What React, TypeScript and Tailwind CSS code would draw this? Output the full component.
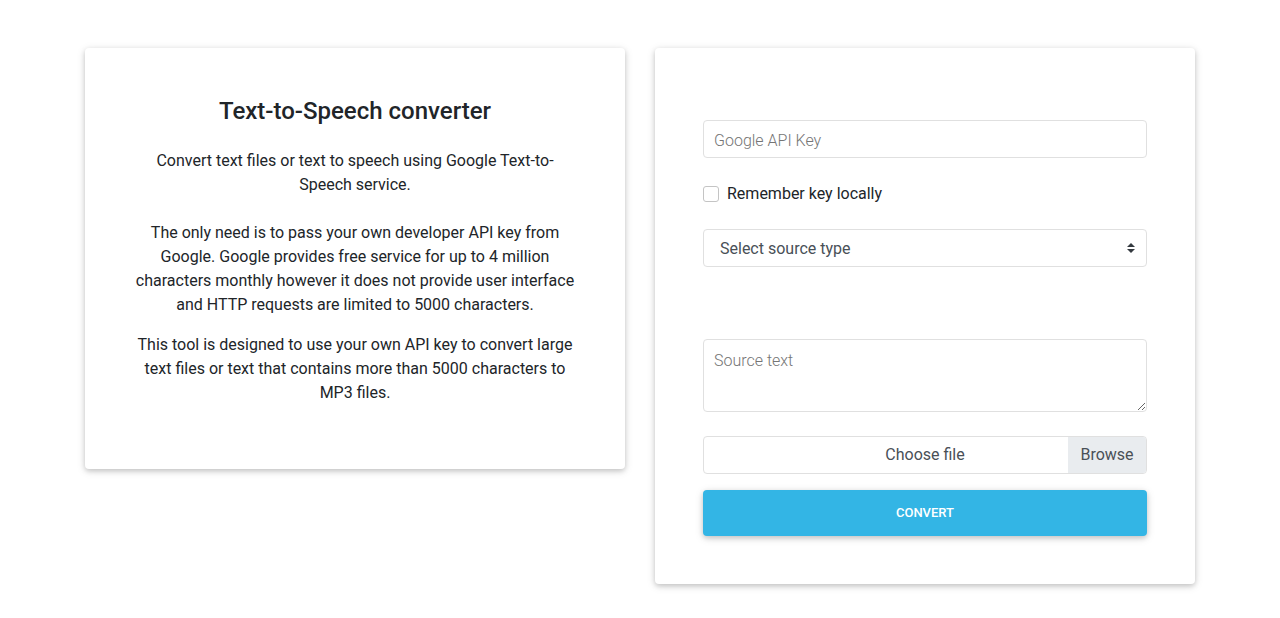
const App = () => {
  return (
    <div className="min-h-[618px] bg-white font-['Roboto',sans-serif] text-[#212529]">
      <div className="mx-auto flex w-[1110px] items-start gap-[30px] pt-12">
        <div className="w-[540px] rounded bg-white px-12 pt-[49px] pb-12 text-center shadow-[0_2px_5px_0_rgba(0,0,0,0.16),0_2px_10px_0_rgba(0,0,0,0.12)]">
          <h4 className="mb-6 text-2xl leading-7 font-medium">Text-to-Speech converter</h4>
          <p className="mb-6 text-base leading-6">
            Convert text files or text to speech using Google Text-to-Speech service.
          </p>
          <p className="mb-4 text-base leading-6">
            The only need is to pass your own developer API key from Google. Google provides free
            service for up to 4 million characters monthly however it does not provide user interface
            and HTTP requests are limited to 5000 characters.
          </p>
          <p className="mb-4 text-base leading-6">
            This tool is designed to use your own API key to convert large text files or text that
            contains more than 5000 characters to MP3 files.
          </p>
        </div>

        <div className="w-[540px] rounded bg-white px-12 pt-[72px] pb-12 shadow-[0_2px_5px_0_rgba(0,0,0,0.16),0_2px_10px_0_rgba(0,0,0,0.12)]">
          <input
            type="text"
            placeholder="Google API Key"
            className="block h-[38px] w-full rounded border border-[#e0e0e0] px-[10px] pt-[3px] text-base font-light text-[#495057] outline-none placeholder:text-[#757575]"
          />
          <label className="mt-6 flex h-6 items-center gap-2 text-base">
            <input
              type="checkbox"
              className="h-4 w-4 appearance-none rounded-[3px] border border-[#c4c4c4] bg-white"
            />
            <span>Remember key locally</span>
          </label>
          <div className="relative mt-[23px]">
            <select className="block h-[38px] w-full appearance-none rounded border border-[#e0e0e0] bg-white pt-[2px] pl-4 text-base text-[#495057] outline-none">
              <option>Select source type</option>
            </select>
            <svg
              className="pointer-events-none absolute top-[13px] right-3"
              width="8"
              height="12"
              viewBox="0 0 8 12"
            >
              <path d="M4 1 L8 5 H0 Z" fill="#343a40" />
              <path d="M4 11 L8 7 H0 Z" fill="#343a40" />
            </svg>
          </div>
          <textarea
            placeholder="Source text"
            className="mt-[72px] block h-[73px] w-full rounded border border-[#e0e0e0] px-[10px] py-[9px] text-base leading-6 font-light text-[#495057] outline-none placeholder:text-[#757575]"
          />
          <div className="relative mt-6 flex h-[38px] items-center justify-center overflow-hidden rounded border border-[#e0e0e0] text-base text-[#495057]">
            <span>Choose file</span>
            <div className="absolute top-0 right-0 bottom-0 flex w-[78px] items-center justify-center bg-[#e9ecef]">
              Browse
            </div>
          </div>
          <button className="mt-4 block h-[46px] w-full rounded-sm bg-[#33b5e5] text-[13px] font-medium text-white uppercase shadow-[0_2px_5px_0_rgba(0,0,0,0.16),0_2px_10px_0_rgba(0,0,0,0.12)]">
            Convert
          </button>
        </div>
      </div>
    </div>
  );
};

export default App;
